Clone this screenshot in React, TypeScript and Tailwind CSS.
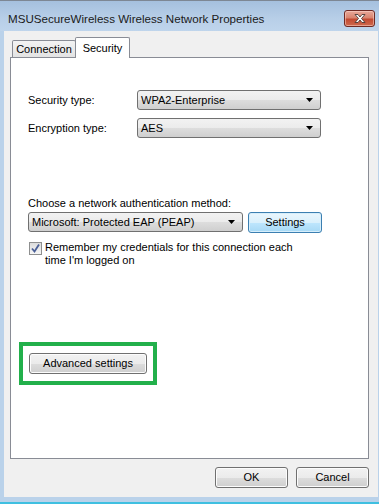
const font = "font-['Segoe_UI','Liberation_Sans',Arial,sans-serif]";

function Caret() {
  return (
    <svg width="8" height="4" viewBox="0 0 8 4" className="shrink-0">
      <path d="M0 0h7L3.5 4z" fill="#000" />
    </svg>
  );
}

function Dropdown({ value, className }: { value: string; className: string }) {
  return (
    <div
      className={`flex h-[20px] items-center justify-between rounded-[3px] border border-[#707070] bg-[linear-gradient(180deg,#f2f2f2_0%,#ebebeb_50%,#dddddd_51%,#cfcfcf_100%)] pl-[3px] pr-[6px] text-[11px] text-black ${className}`}
    >
      <span>{value}</span>
      <Caret />
    </div>
  );
}

function Button({ label, className, primary }: { label: string; className: string; primary?: boolean }) {
  return (
    <button
      type="button"
      className={`flex h-[21px] items-center justify-center rounded-[3px] border text-[11px] text-black ${
        primary
          ? "border-[#3c7fb1] bg-[linear-gradient(180deg,#eaf6fd_0%,#d9f0fc_50%,#bee6fd_51%,#a7d9f5_100%)] shadow-[inset_0_0_0_1px_#d6eefb]"
          : "border-[#707070] bg-[linear-gradient(180deg,#f2f2f2_0%,#ebebeb_50%,#dddddd_51%,#cfcfcf_100%)] shadow-[inset_0_0_0_1px_#fcfcfc]"
      } ${className}`}
    >
      {label}
    </button>
  );
}

function CloseButton() {
  return (
    <div className="flex h-[17px] w-[31px] items-center justify-center rounded-[3px] border border-[#6f2a24] bg-[linear-gradient(180deg,#e8a89a_0%,#d9846f_45%,#c24a32_55%,#cf6a4f_100%)] shadow-[inset_0_0_0_1px_rgba(255,220,210,0.5)]">
      <svg width="14" height="11" viewBox="0 0 14 11">
        <path
          d="M2 1.5h3l2 2.5 2-2.5h3l-3.5 4 3.5 4h-3l-2-2.5-2 2.5h-3l3.5-4z"
          fill="#fff"
          stroke="#4a3a38"
          strokeWidth="0.9"
          strokeLinejoin="round"
        />
      </svg>
    </div>
  );
}

function Checkbox() {
  return (
    <div className="flex h-[13px] w-[13px] shrink-0 items-center justify-center border border-[#8e8f8f] bg-[linear-gradient(180deg,#dcdcdc_0%,#f6f6f6_100%)]">
      <svg width="11" height="11" viewBox="0 0 11 11">
        <path d="M2 5.5l2.5 3L9 1.5" fill="none" stroke="#4a5f97" strokeWidth="1.8" />
      </svg>
    </div>
  );
}

export default function App() {
  return (
    <div className={`flex h-[504px] w-[379px] flex-col overflow-hidden bg-[#bad2ea] ${font}`}>
      <div className="flex h-[31px] shrink-0 items-start justify-between border-t border-[#7d8794] bg-[linear-gradient(180deg,#a5c0de_0%,#b8cfe8_60%,#bfd5ec_100%)] pl-[8px] pr-[4px]">
        <span className="mt-[10px] text-[11.6px] leading-[15px] text-[#1a1a1a]">
          MSUSecureWireless Wireless Network Properties
        </span>
        <div className="mt-[9px]">
          <CloseButton />
        </div>
      </div>

      <div className="ml-[4px] mr-[1px] flex h-[466px] flex-col bg-[#f0f0f0] pl-[6px] pr-[9px] pt-[6px]">
        <div className="flex items-end pl-[2px]">
          <div className="flex h-[17px] w-[64px] items-center justify-center rounded-t-[2px] border border-b-0 border-[#898c95] bg-[linear-gradient(180deg,#f3f3f3_0%,#e3e3e3_100%)] pt-[1px] text-[11px] text-black">
            Connection
          </div>
          <div className="relative z-10 -mb-px -ml-px flex h-[21px] w-[55px] items-start justify-center rounded-t-[2px] border border-b-0 border-[#898c95] bg-white pt-[2px] text-[11px] text-black">
            Security
          </div>
        </div>

        <div className="flex h-[402px] flex-col border border-[#898c95] bg-white px-[17px] pt-[32px] text-[11px] text-black">
          <div className="flex items-center">
            <span className="w-[109px]">Security type:</span>
            <Dropdown value="WPA2-Enterprise" className="w-[184px]" />
          </div>
          <div className="mt-[8px] flex items-center">
            <span className="w-[109px]">Encryption type:</span>
            <Dropdown value="AES" className="w-[184px]" />
          </div>

          <span className="mt-[58px] leading-[15px]">Choose a network authentication method:</span>
          <div className="mt-[1px] flex items-start">
            <Dropdown value="Microsoft: Protected EAP (PEAP)" className="w-[215px]" />
            <Button label="Settings" primary className="ml-[5px] w-[74px]" />
          </div>
          <div className="mt-[9px] flex items-start pl-[1px]">
            <Checkbox />
            <span className="-mt-[1px] ml-[3px] leading-[13px]">
              Remember my credentials for this connection each
              <br />
              time I&apos;m logged on
            </span>
          </div>

          <div className="-ml-[9px] mt-[75px] w-[138px] border-[4px] border-[#22b04b] px-[6px] py-[7px]">
            <Button label="Advanced settings" className="w-[118px]" />
          </div>
        </div>

        <div className="mt-[8px] flex justify-end gap-[8px]">
          <Button label="OK" className="w-[73px]" />
          <Button label="Cancel" className="w-[73px]" />
        </div>
      </div>
      <div className="mt-[5px] h-[2px] bg-[#3fbfe0]" />
    </div>
  );
}
